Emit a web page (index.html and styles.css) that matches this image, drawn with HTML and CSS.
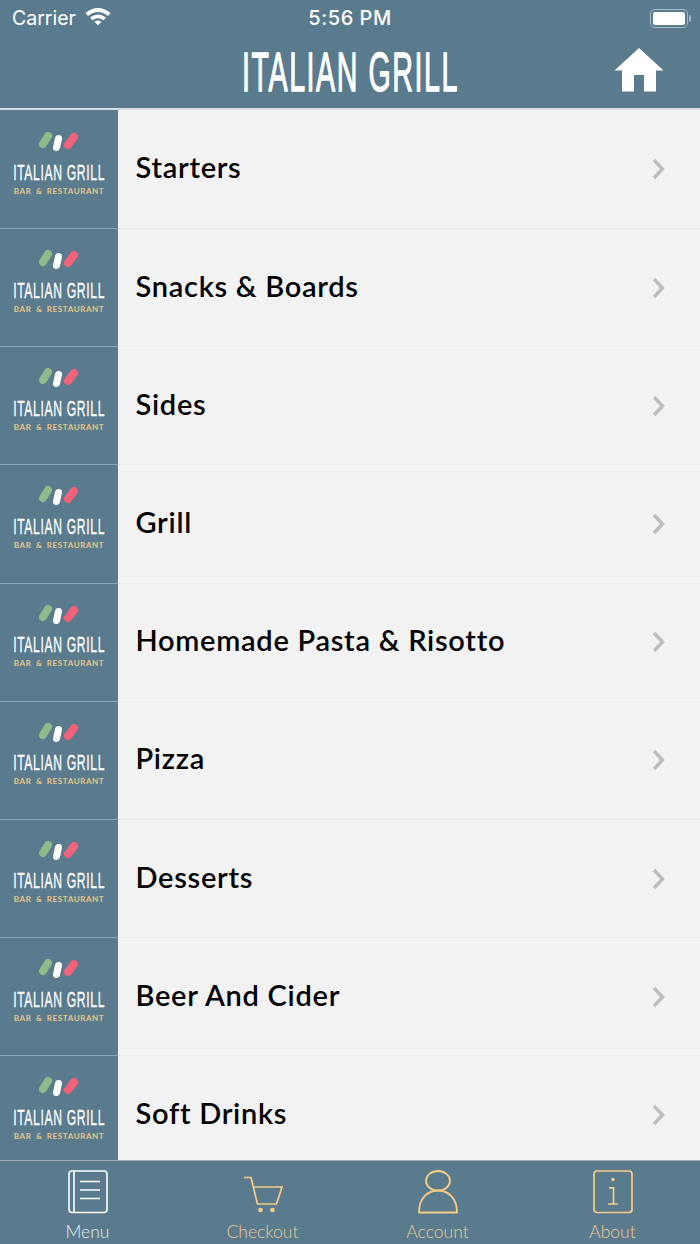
FILE: index.html
```html
<!DOCTYPE html>
<html lang="en">
<head>
<meta charset="utf-8">
<title>Italian Grill</title>
<link rel="stylesheet" href="styles.css">
</head>
<body>
<svg class="defs" width="0" height="0" aria-hidden="true">
  <defs>
    <symbol id="strokes" viewBox="0 0 40 20">
      <path d="M4 12 L9 4" stroke="#8fbb8a" stroke-width="8" stroke-linecap="round" fill="none"/>
      <path d="M17.500 15.500 L19.500 6.500" stroke="#ffffff" stroke-width="7" stroke-linecap="round" fill="none"/>
      <path d="M29 13 L35 5" stroke="#f0637a" stroke-width="8" stroke-linecap="round" fill="none"/>
    </symbol>
    <symbol id="chev" viewBox="0 0 13 22">
      <path d="M2 2 L10.500 11 L2 20" fill="none" stroke="#bdbdbd" stroke-width="3.400"/>
    </symbol>
  </defs>
</svg>
<div class="app">
  <header class="top">
    <div class="status">
      <div class="status-left">
        <span>Carrier</span>
        <svg class="wifi" width="26" height="19" viewBox="0 0 26 18"><path d="M0.500 6.500 Q13 -3.500 25.500 6.500 L23 9.400 Q13 1.600 3 9.400Z M5 11 Q13 5 21 11 L18.500 13.800 Q13 9.800 7.500 13.800Z M9.500 15.200 Q13 12.600 16.500 15.200 L13 18.800Z" fill="#fff"/></svg>
      </div>
      <div class="status-time">5:56 PM</div>
      <div class="status-right">
        <div class="battery"><div class="battery-fill"></div></div>
        <div class="battery-cap"></div>
      </div>
    </div>
    <div class="nav">
      <div class="nav-title">ITALIAN GRILL</div>
      <svg class="home" width="50" height="44" viewBox="0 0 50 44"><path d="M25 0 L49.500 22.500 L42 22.500 L42 43.500 L30 43.500 L30 27 L20 27 L20 43.500 L8 43.500 L8 22.500 L0.500 22.500Z" fill="#fff"/></svg>
    </div>
  </header>
  <main class="list">
    <a class="row"><div class="logo"><svg class="strokes" width="40" height="20"><use href="#strokes"/></svg><div class="logo-name">ITALIAN GRILL</div><div class="logo-sub">BAR &amp; RESTAURANT</div></div><div class="row-body"><span class="row-label">Starters</span><svg class="chev" width="13" height="22"><use href="#chev"/></svg></div></a>
    <a class="row"><div class="logo"><svg class="strokes" width="40" height="20"><use href="#strokes"/></svg><div class="logo-name">ITALIAN GRILL</div><div class="logo-sub">BAR &amp; RESTAURANT</div></div><div class="row-body"><span class="row-label">Snacks &amp; Boards</span><svg class="chev" width="13" height="22"><use href="#chev"/></svg></div></a>
    <a class="row"><div class="logo"><svg class="strokes" width="40" height="20"><use href="#strokes"/></svg><div class="logo-name">ITALIAN GRILL</div><div class="logo-sub">BAR &amp; RESTAURANT</div></div><div class="row-body"><span class="row-label">Sides</span><svg class="chev" width="13" height="22"><use href="#chev"/></svg></div></a>
    <a class="row"><div class="logo"><svg class="strokes" width="40" height="20"><use href="#strokes"/></svg><div class="logo-name">ITALIAN GRILL</div><div class="logo-sub">BAR &amp; RESTAURANT</div></div><div class="row-body"><span class="row-label">Grill</span><svg class="chev" width="13" height="22"><use href="#chev"/></svg></div></a>
    <a class="row"><div class="logo"><svg class="strokes" width="40" height="20"><use href="#strokes"/></svg><div class="logo-name">ITALIAN GRILL</div><div class="logo-sub">BAR &amp; RESTAURANT</div></div><div class="row-body"><span class="row-label">Homemade Pasta &amp; Risotto</span><svg class="chev" width="13" height="22"><use href="#chev"/></svg></div></a>
    <a class="row"><div class="logo"><svg class="strokes" width="40" height="20"><use href="#strokes"/></svg><div class="logo-name">ITALIAN GRILL</div><div class="logo-sub">BAR &amp; RESTAURANT</div></div><div class="row-body"><span class="row-label">Pizza</span><svg class="chev" width="13" height="22"><use href="#chev"/></svg></div></a>
    <a class="row"><div class="logo"><svg class="strokes" width="40" height="20"><use href="#strokes"/></svg><div class="logo-name">ITALIAN GRILL</div><div class="logo-sub">BAR &amp; RESTAURANT</div></div><div class="row-body"><span class="row-label">Desserts</span><svg class="chev" width="13" height="22"><use href="#chev"/></svg></div></a>
    <a class="row"><div class="logo"><svg class="strokes" width="40" height="20"><use href="#strokes"/></svg><div class="logo-name">ITALIAN GRILL</div><div class="logo-sub">BAR &amp; RESTAURANT</div></div><div class="row-body"><span class="row-label">Beer And Cider</span><svg class="chev" width="13" height="22"><use href="#chev"/></svg></div></a>
    <a class="row"><div class="logo"><svg class="strokes" width="40" height="20"><use href="#strokes"/></svg><div class="logo-name">ITALIAN GRILL</div><div class="logo-sub">BAR &amp; RESTAURANT</div></div><div class="row-body"><span class="row-label">Soft Drinks</span><svg class="chev" width="13" height="22"><use href="#chev"/></svg></div></a>
  </main>
  <nav class="tabs">
    <div class="tab tab-active">
      <svg class="tab-icon" width="40" height="44" viewBox="0 0 40 44" fill="none" stroke="currentColor" stroke-width="1.600"><rect x="1" y="1" width="38" height="41.500" rx="3"/><path d="M6 1 V42.500 M12 11.500 H32 M12 20 H32 M12 28.500 H32"/></svg>
      <span class="tab-label">Menu</span>
    </div>
    <div class="tab">
      <svg class="tab-icon" width="40" height="44" viewBox="0 0 40 44" fill="none" stroke="currentColor" stroke-width="1.700"><path d="M1 7.500 H8 L14.500 34 H33.500 L39 17 H9.800"/><circle cx="17.500" cy="40" r="2.300" fill="currentColor" stroke="none"/><circle cx="29.500" cy="40" r="2.300" fill="currentColor" stroke="none"/></svg>
      <span class="tab-label">Checkout</span>
    </div>
    <div class="tab">
      <svg class="tab-icon" width="40" height="44" viewBox="0 0 40 44" fill="none" stroke="currentColor" stroke-width="1.800"><ellipse cx="20" cy="10.800" rx="12" ry="9.800"/><path d="M1 42.500 C1 29 9 20.500 20 20.500 C31 20.500 39 29 39 42.500Z" stroke-linejoin="round"/></svg>
      <span class="tab-label">Account</span>
    </div>
    <div class="tab">
      <svg class="tab-icon" width="40" height="44" viewBox="0 0 40 44" fill="none" stroke="currentColor" stroke-width="1.700"><rect x="1" y="1" width="38" height="41.500" rx="3"/><circle cx="20" cy="9.500" r="1.800" fill="currentColor" stroke="none"/><path d="M16 17.800 H20.500 V34 M15 34 H25"/></svg>
      <span class="tab-label">About</span>
    </div>
  </nav>
</div>
</body>
</html>
```
FILE: styles.css
```css
* { box-sizing: border-box; }
html, body { margin: 0; padding: 0; }
body {
  width: 700px;
  height: 1244px;
  overflow: hidden;
  font-family: "Lato", "Liberation Sans", sans-serif;
  background: #5a7b8e;
}
.defs { display: block; height: 0; }
.app {
  display: flex;
  flex-direction: column;
  width: 700px;
  height: 1244px;
}
.top {
  flex: none;
  height: 110px;
  background: #5a7b8e;
  border-bottom: 2px solid #d9dfe3;
  color: #fff;
}
.status {
  display: grid;
  grid-template-columns: 1fr auto 1fr;
  align-items: center;
  height: 36px;
  padding: 0 9px 0 12px;
}
.status-left {
  display: flex;
  align-items: center;
  gap: 9px;
  font-family: "Inter", "Liberation Sans", sans-serif;
  font-size: 19.500px;
  font-weight: 400;
}
.wifi { margin-top: -6px; }
.status-time {
  font-family: "Inter", "Liberation Sans", sans-serif;
  font-size: 20px;
  font-weight: 500;
  letter-spacing: 0.500px;
  margin-left: -3px;
}
.status-right {
  display: flex;
  align-items: center;
  justify-content: flex-end;
  gap: 1px;
}
.battery {
  width: 38px;
  height: 19px;
  padding: 2px;
  border: 1.500px solid #a6bac5;
  border-radius: 5px;
}
.battery-fill { width: 100%; height: 100%; background: #fff; border-radius: 2.500px; }
.battery-cap { width: 2px; height: 7px; background: #a6bac5; border-radius: 0 2px 2px 0; }
.nav {
  position: relative;
  display: flex;
  align-items: center;
  justify-content: center;
  height: 72px;
}
.nav-title {
  font-family: "Liberation Sans", sans-serif;
  font-size: 55px;
  font-weight: 400;
  line-height: 72px;
  letter-spacing: 3px;
  white-space: nowrap;
  -webkit-text-stroke: 1.300px #fff;
  transform: scaleX(0.520);
}
.home {
  position: absolute;
  left: 614px;
  top: 12px;
}
.list {
  flex: 1;
  min-height: 0;
  overflow: hidden;
  background: #f2f2f2;
}
.row {
  display: flex;
  height: 118.170px;
  color: #000;
}
.logo {
  flex: none;
  display: flex;
  flex-direction: column;
  align-items: center;
  width: 119px;
  padding-top: 22px;
  background: #5a7b8e;
  border-right: 1px solid #f8f8f8;
}
.row + .row .logo {
  padding-top: 21px;
  border-top: 1px solid #8ea5b2;
}
.strokes { display: block; flex: none; }
.logo-name {
  margin-top: 7.500px;
  font-family: "Liberation Sans", sans-serif;
  font-size: 22.500px;
  font-weight: 400;
  line-height: 25px;
  letter-spacing: 1.200px;
  color: #fff;
  white-space: nowrap;
  -webkit-text-stroke: 0.300px #fff;
  transform: scaleX(0.540);
}
.logo-sub {
  font-family: "Lato", sans-serif;
  font-size: 8px;
  font-weight: 700;
  line-height: 11px;
  margin-top: 1px;
  letter-spacing: 0.600px;
  word-spacing: 2px;
  color: #e8c687;
  white-space: nowrap;
}
.row-body {
  flex: 1;
  display: flex;
  align-items: center;
  justify-content: space-between;
  padding: 0 35px 0 16.500px;
}
.row + .row .row-body { border-top: 1px solid #ebebeb; }
.row-label {
  font-size: 29px;
  font-weight: 600;
  line-height: 34px;
  letter-spacing: 0.720px;
  margin-top: -4px;
}
.chev { display: block; }
.tabs {
  flex: none;
  display: grid;
  grid-template-columns: repeat(4, 1fr);
  height: 84px;
  background: #5a7b8e;
  border-top: 1px solid #a4a9ab;
  color: #f6cd86;
}
.tab {
  display: flex;
  flex-direction: column;
  align-items: center;
  padding-top: 9px;
}
.tab-active { color: #fff; }
.tab-icon { display: block; flex: none; }
.tab-label {
  margin-top: 7px;
  font-size: 17.500px;
  line-height: 22px;
  font-weight: 300;
  color: #e8cb94;
}
.tab-active .tab-label { color: #e6ecef; }
```
